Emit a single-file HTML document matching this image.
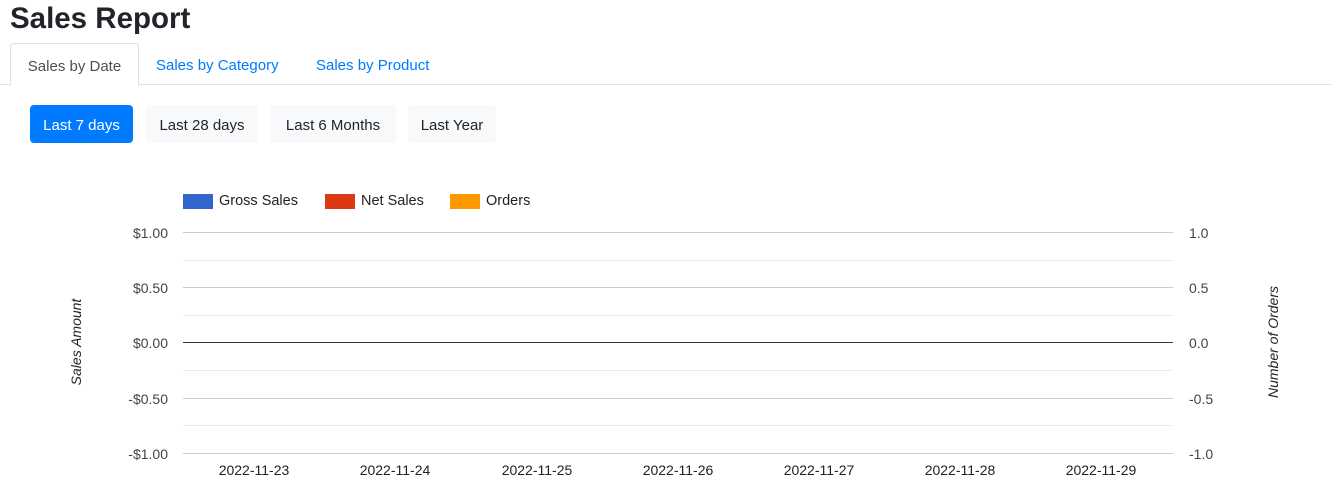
<!DOCTYPE html><html><head><style>
body{margin:0;width:1331px;height:498px;background:#fff;font-family:"Liberation Sans",sans-serif;position:relative;overflow:hidden}
.a{position:absolute;white-space:nowrap}
h1{position:absolute;left:10px;top:0;margin:0;font-size:29.5px;font-weight:bold;color:#212529;line-height:38px}
.tab{position:absolute;top:43px;height:41px;line-height:45px;font-size:15px;color:#007bff}
.btn{position:absolute;top:105px;height:38px;line-height:41px;font-size:15px;color:#212529;background:#f8f9fa;border-radius:4px;text-align:center}
.g{position:absolute;left:183px;width:990px;height:1px;background:#ccc}
.g2{background:#ebebeb}
.yl{position:absolute;width:60px;text-align:right;left:108px;font-size:14px;color:#444}
.yr{position:absolute;left:1189px;font-size:14px;color:#444}
.xl{position:absolute;top:462px;font-size:14px;color:#222;width:100px;text-align:center}
</style></head><body>
<h1>Sales Report</h1>
<div class="a" style="left:0;right:0;top:84px;height:1px;background:#dee2e6"></div>
<div class="tab" style="left:10px;width:127px;border:1px solid #dee2e6;border-bottom:1px solid #fff;border-radius:4px 4px 0 0;background:#fff;color:#495057;text-align:center">Sales by Date</div>
<div class="tab" style="left:156px">Sales by Category</div>
<div class="tab" style="left:316px">Sales by Product</div>
<div class="btn" style="left:30px;width:103px;background:#007bff;color:#fff">Last 7 days</div>
<div class="btn" style="left:146px;width:112px">Last 28 days</div>
<div class="btn" style="left:270px;width:126px">Last 6 Months</div>
<div class="btn" style="left:408px;width:88px">Last Year</div>
<div class="a" style="left:183px;top:194px;width:30px;height:15px;background:#3366cc"></div>
<div class="a" style="left:219px;top:193px;font-size:14.5px;color:#222">Gross Sales</div>
<div class="a" style="left:325px;top:194px;width:30px;height:15px;background:#dc3912"></div>
<div class="a" style="left:361px;top:193px;font-size:14.5px;color:#222">Net Sales</div>
<div class="a" style="left:450px;top:194px;width:30px;height:15px;background:#ff9900"></div>
<div class="a" style="left:486px;top:193px;font-size:14.5px;color:#222">Orders</div>
<div class="g" style="top:232px"></div><div class="g g2" style="top:260px"></div>
<div class="g" style="top:287px"></div><div class="g g2" style="top:315px"></div>
<div class="g" style="top:342px;background:#333"></div><div class="g g2" style="top:370px"></div>
<div class="g" style="top:398px"></div><div class="g g2" style="top:425px"></div>
<div class="g" style="top:453px"></div>
<div class="yl" style="top:225px">$1.00</div><div class="yl" style="top:280px">$0.50</div>
<div class="yl" style="top:335px">$0.00</div><div class="yl" style="top:391px">-$0.50</div>
<div class="yl" style="top:446px">-$1.00</div>
<div class="yr" style="top:225px">1.0</div><div class="yr" style="top:280px">0.5</div>
<div class="yr" style="top:335px">0.0</div><div class="yr" style="top:391px">-0.5</div>
<div class="yr" style="top:446px">-1.0</div>
<div class="a" style="left:76px;top:342px;transform:translate(-50%,-50%) rotate(-90deg);font-size:14px;font-style:italic;color:#222">Sales Amount</div>
<div class="a" style="left:1273px;top:342px;transform:translate(-50%,-50%) rotate(-90deg);font-size:14px;font-style:italic;color:#222">Number of Orders</div>
<div class="xl" style="left:204px">2022-11-23</div><div class="xl" style="left:345px">2022-11-24</div>
<div class="xl" style="left:487px">2022-11-25</div><div class="xl" style="left:628px">2022-11-26</div>
<div class="xl" style="left:769px">2022-11-27</div><div class="xl" style="left:910px">2022-11-28</div>
<div class="xl" style="left:1051px">2022-11-29</div>
</body></html>
